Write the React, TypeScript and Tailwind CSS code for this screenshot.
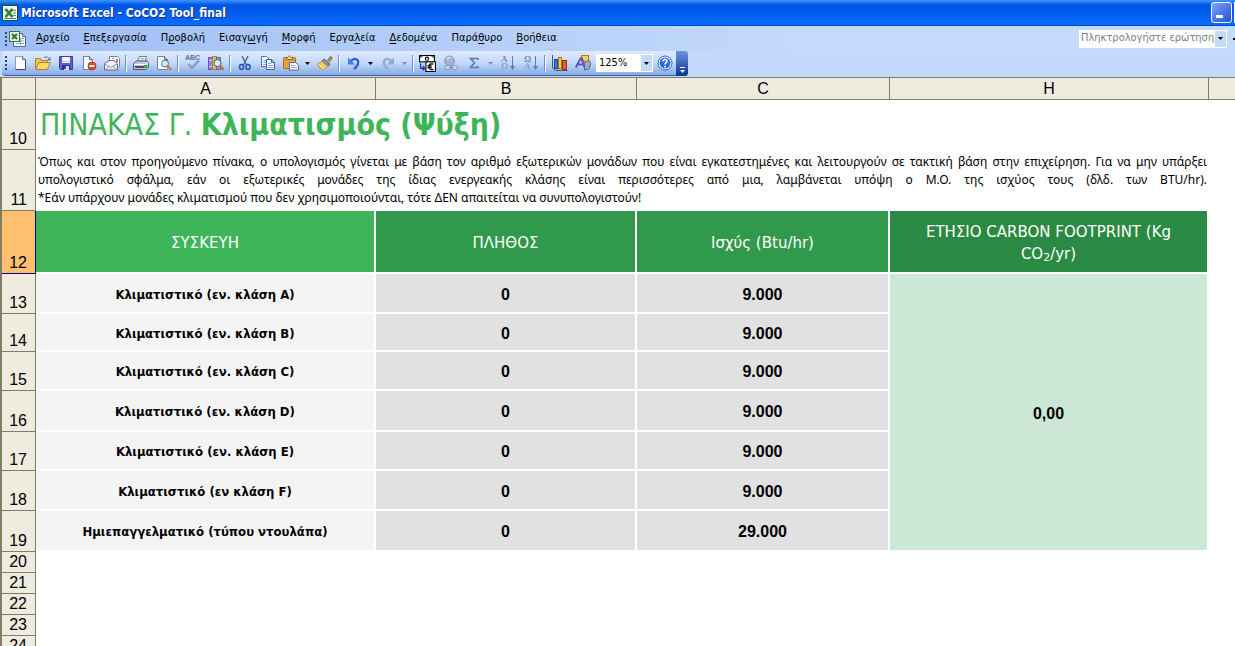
import { ReactNode } from 'react';

interface MenuItem {
  before: string;
  key: string;
  after: string;
}

interface DataRow {
  row: number;
  label: string;
  count: string;
  power: string;
  height: string;
}

const menuItems: MenuItem[] = [
  { before: '', key: 'Α', after: 'ρχείο' },
  { before: '', key: 'Ε', after: 'πεξεργασία' },
  { before: 'Π', key: 'ρ', after: 'οβολή' },
  { before: 'Εισαγ', key: 'ω', after: 'γή' },
  { before: '', key: 'Μ', after: 'ορφή' },
  { before: 'Εργα', key: 'λ', after: 'εία' },
  { before: '', key: 'Δ', after: 'εδομένα' },
  { before: 'Παρά', key: 'θ', after: 'υρο' },
  { before: '', key: 'Β', after: 'οήθεια' },
];

const dataRows: DataRow[] = [
  { row: 13, label: 'Κλιματιστικό (εν. κλάση A)', count: '0', power: '9.000', height: 'h-[40px]' },
  { row: 14, label: 'Κλιματιστικό (εν. κλάση B)', count: '0', power: '9.000', height: 'h-[38px]' },
  { row: 15, label: 'Κλιματιστικό (εν. κλάση C)', count: '0', power: '9.000', height: 'h-[39px]' },
  { row: 16, label: 'Κλιματιστικό (εν. κλάση D)', count: '0', power: '9.000', height: 'h-[41px]' },
  { row: 17, label: 'Κλιματιστικό (εν. κλάση E)', count: '0', power: '9.000', height: 'h-[39px]' },
  { row: 18, label: 'Κλιματιστικό (εν κλάση F)', count: '0', power: '9.000', height: 'h-[40px]' },
  { row: 19, label: 'Ημιεπαγγελματικό (τύπου ντουλάπα)', count: '0', power: '29.000', height: 'h-[41px]' },
];

const emptyRows = [20, 21, 22, 23, 24];

const uiFont = "font-['DejaVu_Sans_Condensed','DejaVu_Sans',sans-serif]";
const wideFont = "font-['DejaVu_Sans',sans-serif]";
const noto = "font-['Noto_Sans',sans-serif]";
const arial = "font-['Liberation_Sans',Arial,sans-serif]";

function Icon({ children, size = 16 }: { children: ReactNode; size?: number }) {
  return (
    <svg width={size} height={size} viewBox="0 0 16 16" fill="none" aria-hidden="true" className="shrink-0">
      {children}
    </svg>
  );
}

function ExcelLogo() {
  return (
    <Icon>
      <rect x="0.5" y="0.5" width="15" height="15" fill="#e9f3e4" stroke="#1c4d24" />
      <rect x="1.5" y="1.5" width="13" height="13" stroke="#fff" />
      <path d="M11 5.5h3M11 8h3M11 10.5h3" stroke="#5d9b60" />
      <path d="M3.500 4l7 8M10.500 4l-7 8" stroke="#2c7d35" strokeWidth="2.600" />
      <path d="M2 13.500h12" stroke="#3c8f45" />
    </Icon>
  );
}

function WorkbookIcon() {
  return (
    <svg width="18" height="18" viewBox="0 0 18 18" fill="none" aria-hidden="true" className="shrink-0">
      <path d="M4.5 3.5h9l3 3v10h-12z" fill="#fff" stroke="#51679a" />
      <path d="M13.5 3.5v3h3" fill="#cfdcf5" stroke="#51679a" />
      <path d="M7 13.5h8M11 8.5h4M11 11h4M11.5 8v7" stroke="#8ea5cf" />
      <rect x="0.5" y="1.5" width="10" height="10" fill="#e6f1e0" stroke="#2d7d37" />
      <path d="M3 4l5 5M8 4L3 9" stroke="#2d7d37" strokeWidth="2" />
    </svg>
  );
}

function NewIcon() {
  return (
    <Icon>
      <path d="M3.5 1.5h7l3 3v10h-10z" fill="#fff" stroke="#8b9dc3" />
      <path d="M10.5 1.5v3h3" fill="#c9d6ee" stroke="#51679a" />
      <path d="M13.5 5v9.5h-10" stroke="#33456e" />
    </Icon>
  );
}

function OpenIcon() {
  return (
    <Icon>
      <path d="M0.5 13.5v-10h5l1 2h6v3" fill="#f5c64d" stroke="#b5802b" />
      <path d="M0.8 14.5l3-7h11.7l-3.2 7z" fill="#ffd968" stroke="#b5802b" />
      <path d="M9 2.500q3-2 5 1" stroke="#5c7690" />
      <path d="M15.500 2v3.500h-3.500z" fill="#5c7690" />
    </Icon>
  );
}

function SaveIcon() {
  return (
    <Icon>
      <path d="M1.500 1.500h13v13h-12l-1-1z" fill="#5a5fd0" stroke="#3a3fa3" />
      <rect x="4" y="2" width="8" height="6" fill="#f2f5ff" />
      <path d="M4 6.500h8" stroke="#b9c6ee" />
      <rect x="4" y="10" width="8" height="5" fill="#2d3285" />
      <rect x="6" y="11" width="5" height="4" fill="#d8def5" />
      <rect x="6" y="11" width="2" height="3" fill="#3a3fa3" />
    </Icon>
  );
}

function PermissionIcon() {
  return (
    <Icon>
      <path d="M2.500 1.500h6l3 3v10h-9z" fill="#fff" stroke="#6e83b3" />
      <path d="M8.500 1.500v3h3" fill="#c9d6ee" stroke="#51679a" />
      <circle cx="11" cy="11" r="4" fill="#dd4a2a" stroke="#c23d1e" />
      <rect x="8.500" y="10" width="5" height="2" fill="#fff" />
    </Icon>
  );
}

function MailIcon() {
  return (
    <Icon>
      <path d="M5.500 7V1.500h8l2 2V12" fill="#fff" stroke="#7081a8" />
      <path d="M8 3.500h3M8 5.500h3" stroke="#a6b4d3" />
      <path d="M0.500 8.500l5-3h4l4 3v6.500h-13z" fill="#eef1f6" stroke="#626e87" />
      <path d="M0.500 9l6 3.500 7-3.500M1 15l4-3.500M13 15l-4-3.500" stroke="#8b95aa" />
      <rect x="12" y="4" width="2" height="3" fill="#e2692f" />
    </Icon>
  );
}

function PrintIcon() {
  return (
    <Icon>
      <path d="M4.500 6.500l2-5h7l-1.500 5z" fill="#fff" stroke="#66789c" />
      <path d="M7.500 3.500h4M7 5h4" stroke="#9fb0d0" />
      <path d="M0.500 8.500l3-2.500h11l1 2v4l-2.500 2.500h-12.500z" fill="#c2c9d8" stroke="#4c566f" />
      <path d="M1 9.500h11.500l3-2" stroke="#fff" />
      <rect x="2" y="11" width="9" height="2" fill="#454e63" />
      <rect x="11" y="10" width="3" height="3" fill="#25b52b" />
    </Icon>
  );
}

function PreviewIcon() {
  return (
    <Icon>
      <path d="M1.500 1.500h7l3 3v10h-10z" fill="#fff" stroke="#6e83b3" />
      <path d="M8.500 1.500v3h3" fill="#c9d6ee" stroke="#51679a" />
      <circle cx="9" cy="8.500" r="3.500" fill="#cfeaf5" stroke="#5d6a80" />
      <path d="M11.500 11l3.500 4" stroke="#c6842a" strokeWidth="2.500" />
    </Icon>
  );
}

function SpellingIcon() {
  return (
    <Icon>
      <text x="0" y="5" fontSize="7" fontWeight="bold" fill="#5c73a8" fontFamily="Liberation Sans">
        ABC
      </text>
      <path d="M3.500 9l3.500 4L14 5.500" stroke="#8fa1c7" strokeWidth="2.600" />
    </Icon>
  );
}

function ResearchIcon() {
  return (
    <Icon>
      <rect x="0.500" y="2.500" width="4" height="12" fill="#9a7fd6" stroke="#6f56b4" />
      <path d="M1 5.500h3M1 11.500h3" stroke="#d8cbf2" />
      <rect x="4.500" y="1.500" width="4" height="13" fill="#e2bb56" stroke="#a8853a" />
      <rect x="8.500" y="2.500" width="4" height="12" fill="#8fa2d8" stroke="#5b6ea6" />
      <circle cx="9.500" cy="8" r="3.500" fill="#d5eff8" stroke="#4c5c7d" />
      <path d="M12 10.500l3.500 4.500" stroke="#b97727" strokeWidth="2.500" />
    </Icon>
  );
}

function CutIcon() {
  return (
    <Icon>
      <path d="M5 1l4.500 9M11 1L6.500 10" stroke="#5f6f93" strokeWidth="1.600" />
      <ellipse cx="4.500" cy="12" rx="2" ry="2.500" stroke="#2556c0" strokeWidth="1.600" />
      <ellipse cx="11" cy="12" rx="2" ry="2.500" stroke="#2556c0" strokeWidth="1.600" />
    </Icon>
  );
}

function CopyIcon() {
  return (
    <Icon>
      <path d="M1.500 1.500h5l3 3v7h-8z" fill="#fff" stroke="#4a72c4" />
      <path d="M3 5.500h4M3 7.500h4M3 9.500h4" stroke="#7fa0df" />
      <path d="M6.500 4.500h5l3 3v7h-8z" fill="#fff" stroke="#3560b8" />
      <path d="M11.500 4.500v3h3" stroke="#3560b8" />
      <path d="M8 8.500h3M8 10.500h5M8 12.500h5" stroke="#7fa0df" />
    </Icon>
  );
}

function PasteIcon() {
  return (
    <Icon>
      <rect x="0.500" y="2.500" width="12" height="11" rx="1" fill="#e5a23a" stroke="#a36a1b" />
      <path d="M3.500 4.500v-2h1.500l1.500-2 1.500 2h1.500v2z" fill="#f3e2b0" stroke="#806331" />
      <path d="M6.500 7.500h6l3 2.500v5h-9z" fill="#fff" stroke="#5b6d95" />
      <path d="M8 10.500h4M8 12.500h6" stroke="#8fa3ca" />
    </Icon>
  );
}

function PainterIcon() {
  return (
    <Icon>
      <path d="M10.500 5.500l3-4 1.800 1.400-3.200 4" fill="#d89a3c" stroke="#875b1f" />
      <path d="M7 4l6 5-2 2.500-6-5z" fill="#8c93a6" stroke="#555d73" />
      <path d="M5 6.500l6 5-4.500 3.500q-4-1.500-6-6z" fill="#f8e37b" stroke="#b5922f" />
      <path d="M3 8.500l5 4.500M4.500 7.500l5 4.500" stroke="#d4b445" />
    </Icon>
  );
}

function UndoIcon() {
  return (
    <Icon>
      <path d="M4 6.500q6-5 8-0.500 1 4-4 8" stroke="#2f62cf" strokeWidth="2.400" />
      <path d="M2 2.500v7h7z" fill="#4a7de0" />
    </Icon>
  );
}

function RedoIcon() {
  return (
    <Icon>
      <path d="M12 6.500q-6-5-8-0.500-1 4 4 8" stroke="#93a8d3" strokeWidth="2.400" />
      <path d="M14 2.500v7H7z" fill="#93a8d3" />
    </Icon>
  );
}

function EuroIcon() {
  return (
    <Icon size={17}>
      <rect x="0.500" y="0.500" width="14" height="6" fill="#fff" stroke="#000" />
      <path d="M1 3V1h3zM14 3V1h-3z" fill="#14871e" />
      <circle cx="7.500" cy="3.500" r="1.500" stroke="#000" />
      <rect x="6.500" y="6.500" width="9" height="9" fill="#fff" stroke="#000" />
      <path d="M13.500 8.500q-4-1-4 2.500t4 2.500M8 10.300h4M8 11.900h4" stroke="#000" strokeWidth="1.200" />
      <path d="M1.500 8v4.500H5M3.500 10.500l2 2-2 2" stroke="#1b2bb0" strokeWidth="1.200" />
    </Icon>
  );
}

function LinkIcon() {
  return (
    <Icon>
      <circle cx="6.500" cy="6" r="5" fill="#a5b2d0" stroke="#8c9cc2" />
      <path d="M4 4q2-2.500 4-1" stroke="#dce4f5" strokeWidth="1.500" />
      <rect x="2" y="10.500" width="6" height="4" rx="2" fill="#cdd8ee" stroke="#8494bb" />
      <rect x="8.500" y="10.500" width="6" height="4" rx="2" fill="#cdd8ee" stroke="#8494bb" />
      <path d="M6 12.500h5" stroke="#8494bb" />
    </Icon>
  );
}

function SumIcon() {
  return (
    <Icon>
      <path d="M12 5V3.500H4.500l4 4.300L4.500 12.500H12V11" stroke="#5f7ab5" strokeWidth="1.600" />
    </Icon>
  );
}

function SortIcon({ top, bottom }: { top: string; bottom: string }) {
  return (
    <Icon>
      <text x="1" y="7" fontSize="9" fontWeight="bold" fill="#7389b8" fontFamily="Liberation Serif">
        {top}
      </text>
      <text x="1" y="14" fontSize="9" fontWeight="bold" fill="#8c9fc8" fontFamily="Liberation Serif">
        {bottom}
      </text>
      <path d="M12.500 1v11" stroke="#5f7ab5" />
      <path d="M10 11h5l-2.500 4z" fill="#5f7ab5" />
    </Icon>
  );
}

function ChartIcon() {
  return (
    <Icon>
      <path d="M0.500 0v13l3 2.500h12" stroke="#4a5263" />
      <rect x="2.500" y="4.500" width="3" height="9" fill="#3c78dd" stroke="#1f4796" />
      <rect x="6.500" y="2.500" width="3" height="11" fill="#f6cf45" stroke="#a57c15" />
      <rect x="10.500" y="5.500" width="4" height="9" fill="#e2603a" stroke="#952c12" />
    </Icon>
  );
}

function DrawingIcon() {
  return (
    <Icon>
      <rect x="6.500" y="0.500" width="7" height="6" fill="#f3cf65" stroke="#a57c22" />
      <path d="M9.500 8l4-3 2.500 3-2 6-4.500 1z" fill="#9fa8bd" stroke="#5b6784" />
      <path d="M0.800 12.500L5.500 3.500h1.500l2.500 9M2.500 9.500h6" stroke="#5d53bd" strokeWidth="2" />
    </Icon>
  );
}

function HelpIcon() {
  return (
    <Icon>
      <circle cx="8" cy="8" r="7" fill="#fff" stroke="#2b62cf" />
      <circle cx="8" cy="8" r="5.500" fill="#2b6be0" />
      <path d="M6 6.500q0-2 2-2t2 1.800q0 1-1.200 1.700-.8.500-.8 1.500M8 10.800v1.700" stroke="#fff" strokeWidth="1.600" />
    </Icon>
  );
}

function Arrow({ className = 'fill-black' }: { className?: string }) {
  return (
    <svg width="5" height="3" viewBox="0 0 5 3" aria-hidden="true" className={className}>
      <path d="M0 0h5L2.500 3z" />
    </svg>
  );
}

function Tool({ label, children }: { label: string; children: ReactNode }) {
  return (
    <button type="button" aria-label={label} className="flex h-6 w-[23px] shrink-0 items-center justify-center">
      {children}
    </button>
  );
}

function ToolArrow({ label, muted = false }: { label: string; muted?: boolean }) {
  return (
    <button type="button" aria-label={label} className="flex h-6 w-[11px] shrink-0 items-center justify-center">
      <Arrow className={muted ? 'fill-[#8d8d8d]' : 'fill-black'} />
    </button>
  );
}

function Separator() {
  return <span className="mr-[3px] ml-[2px] h-4 w-px shrink-0 bg-[#6a8ccb] shadow-[1px_1px_0_#fff]" />;
}

function Grip() {
  return (
    <span className="flex shrink-0 flex-col gap-[2px]">
      {[0, 1, 2, 3].map((n) => (
        <span key={n} className="h-[2px] w-[2px] bg-[#27418b]" />
      ))}
    </span>
  );
}

function TitleBar() {
  return (
    <header className="flex h-[26px] shrink-0 items-center border-b border-[#0046c8] bg-linear-to-b from-[#3d95ff] via-[#0054e3] via-20% to-[#0a6cff] pl-[2px]">
      <ExcelLogo />
      <h1 className="ml-[3px] flex-1 text-[12px] font-bold text-white [text-shadow:1px_1px_0_#0f2f86]">
        Microsoft Excel - CoCO2 Tool_final
      </h1>
      <button
        type="button"
        aria-label="Minimize"
        className="flex h-[21px] w-[21px] items-end rounded-[3px] border border-white bg-linear-to-br from-[#7ea4f5] to-[#1f50d8] pb-[4px] pl-[4px]"
      >
        <span className="h-[3px] w-[7px] bg-white" />
      </button>
      <span className="ml-[2px] h-[21px] w-px bg-white" />
    </header>
  );
}

function MenuBar() {
  return (
    <nav className="flex h-[25px] shrink-0 items-center bg-linear-to-r from-[#9ebef5] to-[#c4dafa] to-65% pl-[5px] text-[11px]">
      <Grip />
      <span className="mr-[9px] ml-[2px]">
        <WorkbookIcon />
      </span>
      <div className="flex flex-1 gap-[14px]">
        {menuItems.map((item) => (
          <button key={item.key} type="button" className="text-black">
            {item.before}
            <span className="underline underline-offset-2">{item.key}</span>
            {item.after}
          </button>
        ))}
      </div>
      <div className="mr-[6px] flex h-[18px] w-[148px] items-center border border-white bg-white">
        <input
          type="text"
          aria-label="Ερώτηση"
          placeholder="Πληκτρολογήστε ερώτηση"
          className="h-4 min-w-0 flex-1 pl-px outline-none placeholder:text-[#808080]"
        />
        <button type="button" aria-label="Λίστα ερωτήσεων" className="flex h-4 w-[11px] items-center justify-center bg-[#c4dafa]">
          <Arrow />
        </button>
      </div>
      <span className="h-[2px] w-[2px] bg-black" />
    </nav>
  );
}

function Toolbar() {
  return (
    <div className="flex h-[26px] shrink-0 bg-[#c4d8f9] pl-[2px]">
      <div className="flex h-[25px] items-center rounded-l-[4px] border-b border-[#3b619c] bg-linear-to-b from-[#dfebfe] via-[#c3d9fb] to-[#86a9e4] pl-[3px]">
        <Grip />
        <span className="w-px" />
        <Tool label="Νέο"><NewIcon /></Tool>
        <Tool label="Άνοιγμα"><OpenIcon /></Tool>
        <Tool label="Αποθήκευση"><SaveIcon /></Tool>
        <Tool label="Δικαιώματα"><PermissionIcon /></Tool>
        <Tool label="Αλληλογραφία"><MailIcon /></Tool>
        <Separator />
        <Tool label="Εκτύπωση"><PrintIcon /></Tool>
        <Tool label="Προεπισκόπηση"><PreviewIcon /></Tool>
        <Separator />
        <Tool label="Ορθογραφία"><SpellingIcon /></Tool>
        <Tool label="Έρευνα"><ResearchIcon /></Tool>
        <Separator />
        <Tool label="Αποκοπή"><CutIcon /></Tool>
        <Tool label="Αντιγραφή"><CopyIcon /></Tool>
        <Tool label="Επικόλληση"><PasteIcon /></Tool>
        <ToolArrow label="Επιλογές επικόλλησης" />
        <Tool label="Πινέλο μορφοποίησης"><PainterIcon /></Tool>
        <Separator />
        <Tool label="Αναίρεση"><UndoIcon /></Tool>
        <ToolArrow label="Ιστορικό αναίρεσης" />
        <Tool label="Επανάληψη"><RedoIcon /></Tool>
        <ToolArrow label="Ιστορικό επανάληψης" muted />
        <Separator />
        <Tool label="Μετατροπή σε ευρώ"><EuroIcon /></Tool>
        <Tool label="Υπερ-σύνδεση"><LinkIcon /></Tool>
        <Tool label="Άθροισμα"><SumIcon /></Tool>
        <ToolArrow label="Συναρτήσεις" muted />
        <Tool label="Αύξουσα ταξινόμηση"><SortIcon top="Α" bottom="Ω" /></Tool>
        <Tool label="Φθίνουσα ταξινόμηση"><SortIcon top="Ω" bottom="Α" /></Tool>
        <Separator />
        <Tool label="Γράφημα"><ChartIcon /></Tool>
        <Tool label="Σχεδίαση"><DrawingIcon /></Tool>
        <div className="ml-[2px] flex h-[18px] w-[57px] items-center border border-white bg-white text-[11px]">
          <input type="text" aria-label="Ζουμ" defaultValue="125%" className="h-4 min-w-0 flex-1 pl-[2px] outline-none" />
          <button type="button" aria-label="Λίστα ζουμ" className="flex h-4 w-[11px] items-center justify-center bg-[#c4dafa]">
            <Arrow />
          </button>
        </div>
        <Tool label="Βοήθεια"><HelpIcon /></Tool>
      </div>
      <button
        type="button"
        aria-label="Επιλογές γραμμής εργαλείων"
        className="flex h-[25px] w-3 flex-col items-center justify-end gap-[2px] rounded-r-[3px] bg-linear-to-b from-[#6f93dc] to-[#0a3390] pb-[3px]"
      >
        <span className="h-px w-[5px] bg-white" />
        <Arrow className="fill-white" />
      </button>
    </div>
  );
}

function RowHeader({ n, active = false }: { n: number; active?: boolean }) {
  return (
    <th
      scope="row"
      className={`border-r border-b pr-2 text-right align-bottom text-[16px] leading-5 font-normal ${arial} ${
        active ? 'border-[#000080] bg-[#ffc06f]' : 'border-[#807d68] bg-[#efebde]'
      }`}
    >
      {n}
    </th>
  );
}

function Sheet() {
  const columnClass = `border-r border-b border-[#807d68] bg-[#efebde] text-[16px] leading-5 font-normal ${arial}`;
  const headClass = `border-r-2 border-b-2 border-white px-5 pt-[2px] text-[15px] leading-[22px] font-normal text-white ${wideFont}`;
  const cellClass = 'border-r-2 border-b-2 border-white pt-[3px] text-center font-bold';

  return (
    <main className="min-h-0 flex-1 overflow-hidden border-t border-l-2 border-[#807d68] bg-white">
      <table className="w-full table-fixed border-separate border-spacing-0">
        <colgroup>
          <col className="w-[34px]" />
          <col className="w-[340px]" />
          <col className="w-[261px]" />
          <col className="w-[253px]" />
          <col className="w-[319px]" />
          <col />
        </colgroup>
        <thead>
          <tr className="h-[22px]">
            <td className={columnClass} />
            <th scope="col" className={columnClass}>A</th>
            <th scope="col" className={columnClass}>B</th>
            <th scope="col" className={columnClass}>C</th>
            <th scope="col" className={columnClass}>H</th>
            <td className="border-b border-[#807d68] bg-[#efebde]" />
          </tr>
        </thead>
        <tbody>
          <tr className="h-[50px]">
            <RowHeader n={10} />
            <td colSpan={4} className="pl-1 text-[30px] leading-10 text-[#3fb55a]">
              ΠΙΝΑΚΑΣ Γ. <strong>Κλιματισμός (Ψύξη)</strong>
            </td>
            <td />
          </tr>
          <tr className="h-[61px]">
            <RowHeader n={11} />
            <td colSpan={4} className={`px-[2px] pb-[2px] text-[12px] leading-[18px] whitespace-nowrap ${noto}`}>
              <p className="[text-align-last:justify]">
                Όπως και στον προηγούμενο πίνακα, ο υπολογισμός γίνεται με βάση τον αριθμό εξωτερικών μονάδων που είναι
                εγκατεστημένες και λειτουργούν σε τακτική βάση στην επιχείρηση. Για να μην υπάρξει
              </p>
              <p className="[text-align-last:justify]">
                υπολογιστικό σφάλμα, εάν οι εξωτερικές μονάδες της ίδιας ενεργεακής κλάσης είναι περισσότερες από μια,
                λαμβάνεται υπόψη ο Μ.Ο. της ισχύος τους (δλδ. των BTU/hr).
              </p>
              <p>
                *Εάν υπάρχουν μονάδες κλιματισμού που δεν χρησιμοποιούνται, τότε ΔΕΝ απαιτείται να συνυπολογιστούν!
              </p>
            </td>
            <td />
          </tr>
          <tr className="h-[63px]">
            <RowHeader n={12} active />
            <th scope="col" className={`${headClass} bg-[#3fb559]`}>ΣΥΣΚΕΥΗ</th>
            <th scope="col" className={`${headClass} bg-[#31994b]`}>ΠΛΗΘΟΣ</th>
            <th scope="col" className={`${headClass} bg-[#31994b]`}>Ισχύς (Btu/hr)</th>
            <th scope="col" className={`${headClass} bg-[#2a8a43]`}>
              ΕΤΗΣΙΟ CARBON FOOTPRINT (Kg CO<sub className="text-[11px] leading-none">2</sub>/yr)
            </th>
            <td />
          </tr>
          {dataRows.map((item, index) => (
            <tr key={item.row} className={item.height}>
              <RowHeader n={item.row} />
              <td className={`${cellClass} bg-[#f4f4f4] text-[13px]`}>{item.label}</td>
              <td className={`${cellClass} bg-[#e1e1e1] text-[16px] ${arial}`}>{item.count}</td>
              <td className={`${cellClass} bg-[#e1e1e1] text-[16px] ${arial}`}>{item.power}</td>
              {index === 0 && (
                <td rowSpan={dataRows.length} className={`${cellClass} bg-[#cce7d5] text-[16px] ${arial}`}>
                  0,00
                </td>
              )}
              <td />
            </tr>
          ))}
          {emptyRows.map((n) => (
            <tr key={n} className="h-[21px]">
              <RowHeader n={n} />
              <td colSpan={5} />
            </tr>
          ))}
        </tbody>
      </table>
    </main>
  );
}

export default function App() {
  return (
    <div className={`flex h-screen flex-col overflow-hidden bg-white text-black ${uiFont}`}>
      <TitleBar />
      <MenuBar />
      <Toolbar />
      <Sheet />
    </div>
  );
}
